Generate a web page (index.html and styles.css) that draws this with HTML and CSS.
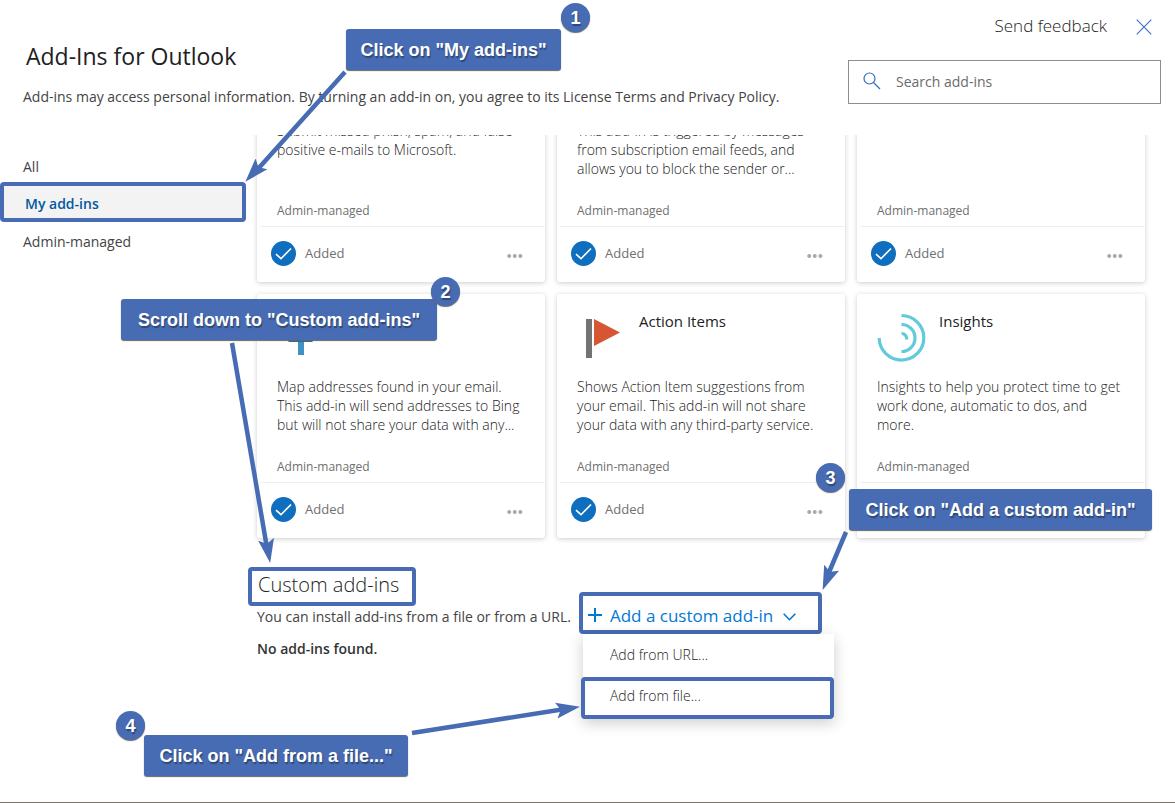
FILE: index.html
```html
<!DOCTYPE html>
<html lang="en">
<head>
<meta charset="utf-8">
<title>Add-Ins for Outlook</title>
<link rel="stylesheet" href="styles.css">
</head>
<body>
<svg class="sprite" aria-hidden="true">
  <symbol id="check" viewBox="0 0 25 25"><circle cx="12.500" cy="12.500" r="12.500" fill="#106ebe"/><path d="M5 13.200l5 4.500L20 7.500" fill="none" stroke="#fff" stroke-width="1.600"/></symbol>
  <symbol id="dots" viewBox="0 0 16 4"><circle cx="2.200" cy="2" r="2"/><circle cx="7.800" cy="2" r="2"/><circle cx="13.400" cy="2" r="2"/></symbol>
</svg>
<div class="page">
  <header class="header">
    <div class="intro">
      <h1 class="title">Add-Ins for Outlook</h1>
      <p class="notice">Add-ins may access personal information. By turning an add-in on, you agree to its License Terms and Privacy Policy.</p>
    </div>
    <div class="tools">
      <div class="actions">
        <button class="feedback" type="button">Send feedback</button>
        <button class="close" type="button" aria-label="Close"><svg width="16" height="16" viewBox="0 0 16 16"><path d="M.7.7l14.600 14.600M15.300.7L.7 15.300" stroke="#4472c4" stroke-width="1.200"/></svg></button>
      </div>
      <label class="search">
        <svg width="18" height="18" viewBox="0 0 18 18" fill="none" stroke="#2f6fc4" stroke-width="1.200"><circle cx="6.500" cy="6.500" r="5.500"/><path d="M10.500 10.500l6.500 6.500"/></svg>
        <input type="text" placeholder="Search add-ins" aria-label="Search add-ins">
      </label>
    </div>
  </header>
  <div class="body">
    <nav class="nav">
      <a class="nav-item" href="#all">All</a>
      <a class="nav-item nav-current" href="#mine">My add-ins</a>
      <a class="nav-item" href="#admin">Admin-managed</a>
    </nav>
    <main class="content">
      <div class="cards">
        <article class="card">
          <div class="card-head"></div>
          <p class="desc">Submit missed phish, spam, and false<br>positive e-mails to Microsoft.</p>
          <p class="meta">Admin-managed</p>
          <div class="card-foot"><svg class="check"><use href="#check"/></svg><span>Added</span><button class="more" type="button" aria-label="More options"><svg width="16" height="4"><use href="#dots"/></svg></button></div>
        </article>
        <article class="card">
          <div class="card-head"></div>
          <p class="desc">This add-in is triggered by messages<br>from subscription email feeds, and<br>allows you to block the sender or...</p>
          <p class="meta">Admin-managed</p>
          <div class="card-foot"><svg class="check"><use href="#check"/></svg><span>Added</span><button class="more" type="button" aria-label="More options"><svg width="16" height="4"><use href="#dots"/></svg></button></div>
        </article>
        <article class="card">
          <div class="card-head"></div>
          <p class="desc"></p>
          <p class="meta">Admin-managed</p>
          <div class="card-foot"><svg class="check"><use href="#check"/></svg><span>Added</span><button class="more" type="button" aria-label="More options"><svg width="16" height="4"><use href="#dots"/></svg></button></div>
        </article>
        <article class="card">
          <div class="card-head">
            <svg class="logo" viewBox="0 0 50 50"><path d="M10 0h27v27H10z" fill="#3f8fc4"/><path d="M10 27h27l-2 2H12z" fill="#1f6f9f"/><path d="M21 29h6v13h-6z" fill="#4092c5"/></svg>
          </div>
          <p class="desc">Map addresses found in your email.<br>This add-in will send addresses to Bing<br>but will not share your data with any...</p>
          <p class="meta">Admin-managed</p>
          <div class="card-foot"><svg class="check"><use href="#check"/></svg><span>Added</span><button class="more" type="button" aria-label="More options"><svg width="16" height="4"><use href="#dots"/></svg></button></div>
        </article>
        <article class="card">
          <div class="card-head">
            <svg class="logo" viewBox="0 0 50 50"><path d="M9 6h6v39H9z" fill="#737373"/><path d="M17 6l26 13.500L17 33z" fill="#d65532"/></svg>
            <h2 class="name">Action Items</h2>
          </div>
          <p class="desc">Shows Action Item suggestions from<br>your email. This add-in will not share<br>your data with any third-party service.</p>
          <p class="meta">Admin-managed</p>
          <div class="card-foot"><svg class="check"><use href="#check"/></svg><span>Added</span><button class="more" type="button" aria-label="More options"><svg width="16" height="4"><use href="#dots"/></svg></button></div>
        </article>
        <article class="card">
          <div class="card-head">
            <svg class="logo" viewBox="0 0 50 50" fill="none" stroke="#62cadb" stroke-width="3.200"><path d="M24.500 2.500a22.300 22.300 0 1 1-22.300 22.500"/><path d="M24.500 11.500a13.500 13.500 0 0 1 0 27"/><path d="M24.500 20.500a5 5 0 0 1 5 6"/></svg>
            <h2 class="name">Insights</h2>
          </div>
          <p class="desc">Insights to help you protect time to get<br>work done, automatic to dos, and<br>more.</p>
          <p class="meta">Admin-managed</p>
          <div class="card-foot"></div>
        </article>
      </div>
      <section class="custom">
        <h2 class="custom-title">Custom add-ins</h2>
        <div class="custom-row">
          <p class="custom-text">You can install add-ins from a file or from a URL.</p>
          <div class="dropdown">
            <button class="add" type="button" aria-haspopup="menu" aria-expanded="true">
              <svg width="14" height="14" viewBox="0 0 14 14"><path d="M7 0v14M0 7h14" stroke="#0078d4" stroke-width="2"/></svg>
              <span>Add a custom add-in</span>
              <svg class="chevron" width="13" height="8" viewBox="0 0 13 8"><path d="M.7.7l5.800 6 5.800-6" fill="none" stroke="#0078d4" stroke-width="1.600"/></svg>
            </button>
            <div class="menu" role="menu">
              <button class="menu-item" type="button" role="menuitem">Add from URL...</button>
              <button class="menu-item menu-marked" type="button" role="menuitem">Add from file...</button>
            </div>
          </div>
        </div>
        <p class="empty">No add-ins found.</p>
      </section>
    </main>
  </div>
  <footer class="edge"></footer>

  <svg class="arrows" width="1175" height="803" viewBox="0 0 1175 803" aria-hidden="true">
    <defs><marker id="tip" viewBox="0 0 24 18" refX="23" refY="9" markerWidth="24" markerHeight="18" markerUnits="userSpaceOnUse" orient="auto"><path d="M24 9L0 1l4.500 8L0 17z" fill="#476cb4"/></marker></defs>
    <g stroke="#476cb4" stroke-width="4.500" fill="none">
      <path d="M345 72L257 170"/><path d="M232 343L267 548"/><path d="M846 532L827 577"/><path d="M412 733L565 709"/>
    </g>
    <g stroke="none">
      <path d="M345 72L246 181" marker-end="url(#tip)"/><path d="M232 343L270 562" marker-end="url(#tip)"/><path d="M846 532L823 589" marker-end="url(#tip)"/><path d="M412 733L579 707" marker-end="url(#tip)"/>
    </g>
  </svg>
  <div class="callout c1">Click on "My add-ins"</div><div class="step s1">1</div>
  <div class="callout c2">Scroll down to "Custom add-ins"</div><div class="step s2">2</div>
  <div class="callout c3">Click on "Add a custom add-in"</div><div class="step s3">3</div>
  <div class="callout c4">Click on "Add from a file..."</div><div class="step s4">4</div>
</div>
</body>
</html>
```
FILE: styles.css
```css
* { box-sizing: border-box; }
body { margin: 0; background: #fff; color: #444; font: 14px/19px "Open Sans", "Noto Sans", sans-serif; }
h1, h2, p { margin: 0; font-weight: 400; }
button { border: 0; padding: 0; background: none; color: inherit; font: inherit; }
svg { display: block; flex: none; }
.sprite { position: absolute; width: 0; height: 0; }
.page { position: relative; display: flex; flex-direction: column; height: 100vh; overflow: hidden; }

.header { display: flex; justify-content: space-between; height: 135px; flex: none; padding: 0 14px 0 23px; }
.intro { padding-top: 39px; }
.title { padding-left: 3px; color: #212121; font-size: 23px; line-height: 34px; }
.notice { margin-top: 14px; white-space: nowrap; }
.tools { width: 313px; padding-top: 14px; }
.actions { display: flex; justify-content: flex-end; align-items: center; gap: 29px; height: 26px; padding-right: 9px; }
.feedback { padding-bottom: 2px; font-size: 17px; font-weight: 300; line-height: 24px; color: #222; }
.search { display: flex; align-items: center; gap: 15px; height: 44px; margin-top: 20px; padding: 0 14px 2px; border: 1px solid #8e8e8e; }
.search input { flex: 1; min-width: 0; border: 0; padding: 0; outline: 0; background: none; font: inherit; }
.search input::placeholder { color: #6b6b6b; opacity: 1; }

.body { display: flex; flex: 1; min-height: 0; }
.nav { width: 246px; flex: none; padding-top: 17px; }
.nav-item { display: flex; align-items: center; height: 40px; padding: 0 0 2px 23px; color: #444; text-decoration: none; }
.nav-item:first-child { height: 30px; }
.nav-current { padding: 2px 0 0 21px; border: 4px solid #476cb4; border-radius: 4px; background: #f3f3f3; color: #005a9e; font-weight: 600; }

.content { flex: 1; min-width: 0; overflow: hidden; padding: 0 30px 0 11px; }
.cards { display: grid; grid-template-columns: repeat(3, minmax(0, 1fr)); gap: 12px; margin-top: -97px; }
.card { height: 244px; border-radius: 3px; background: #fff; box-shadow: 0 1px 5px rgba(0, 0, 0, .2); }
.card-head { display: flex; gap: 12px; height: 83px; padding: 18px 20px 0; }
.logo { width: 50px; height: 50px; margin-top: 1px; overflow: visible; }
.name { height: 19px; color: #222; font-size: 15px; font-weight: 500; }
.desc { height: 57px; padding-left: 20px; color: #222; font-weight: 300; white-space: nowrap; }
.meta { margin-top: 23px; padding-left: 20px; color: #707070; font-size: 12px; line-height: 20px; }
.card-foot { display: flex; align-items: center; height: 57px; margin: 5px 0 0 3px; padding: 0 22px 4px 11px; border-top: 1px solid #f0f0f0; color: #707070; font-size: 13px; }
.check { width: 25px; height: 25px; margin-right: 9px; }
.more { margin-left: auto; padding-top: 5px; fill: #a8a8a8; }

.custom { padding-top: 29px; }
.custom-title { width: 168px; margin-left: -9px; padding: 0 6px 4px; border: 4px solid #476cb4; border-radius: 4px; color: #222; font-size: 20px; font-weight: 300; line-height: 27px; }
.custom-row { display: flex; align-items: center; gap: 8px; height: 42px; margin-top: -14px; }
.custom-text { padding-top: 6px; white-space: nowrap; }
.dropdown { position: relative; }
.add { display: flex; align-items: center; gap: 8px; width: 243px; height: 42px; padding: 4px 5px 0; border: 4px solid #476cb4; border-radius: 4px; color: #0078d4; font-size: 17px; white-space: nowrap; }
.chevron { margin: 4px 0 0 2px; }
.menu { position: absolute; top: 42px; left: 4px; width: 251px; background: #fff; box-shadow: 0 4px 14px rgba(0, 0, 0, .2); color: #222; font-weight: 300; }
.menu-item { display: block; width: 100%; height: 43px; padding: 0 0 2px 27px; text-align: left; }
.menu-marked { width: 253px; height: 42px; margin-left: -2px; padding: 0 0 6px 25px; border: 4px solid #476cb4; border-radius: 4px; }
.empty { margin-top: 5px; color: #333; font-weight: 600; }
.edge { height: 1px; flex: none; background: #777468; }

.arrows { position: absolute; top: 0; left: 0; }
.callout, .step { position: absolute; display: flex; align-items: center; justify-content: center; background: #476cb4; color: #fff; font: bold 18px/20px "Liberation Sans", Arial, sans-serif; text-shadow: 1px 2px 1px rgba(0, 0, 0, .35); box-shadow: 0 1px 1px #666; white-space: nowrap; }
.callout { height: 41px; border-radius: 3px; }
.step { width: 29px; height: 29px; border-radius: 50%; }
.c1 { left: 346px; top: 29px; width: 215px; }
.c2 { left: 121px; top: 299px; width: 316px; }
.c3 { left: 849px; top: 489px; width: 303px; }
.c4 { left: 144px; top: 735px; width: 264px; }
.s1 { left: 561px; top: 3px; }
.s2 { left: 431px; top: 277px; }
.s3 { left: 816px; top: 463px; }
.s4 { left: 116px; top: 711px; }
```
